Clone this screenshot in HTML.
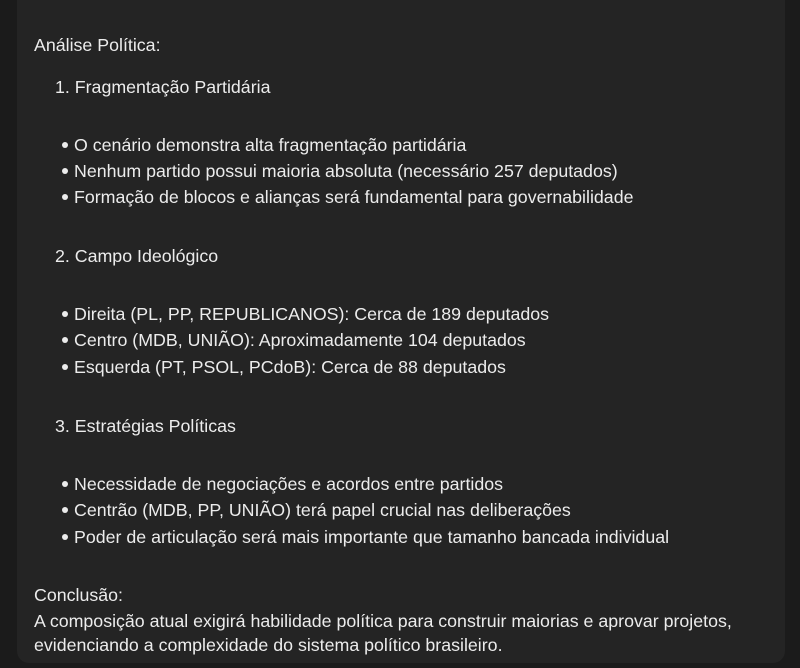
<!DOCTYPE html>
<html><head><meta charset="utf-8"><style>
html,body{margin:0;padding:0;width:800px;height:668px;background:#1b1b1b;overflow:hidden}
.card{position:absolute;left:17px;top:-20px;width:768px;height:683px;background:#242424;border-radius:12px}
.l{position:absolute;font-family:"Liberation Sans",sans-serif;font-size:17.8px;color:#ececec;white-space:nowrap;line-height:20px}
.b::before{content:"";position:absolute;left:-12px;top:7px;width:6px;height:6px;border-radius:50%;background:#ececec}
</style></head><body>
<div class="card"></div>
<div class="l" style="left:34px;top:35px">Análise Política:</div>
<div class="l" style="left:55px;top:77px">1. Fragmentação Partidária</div>
<div class="l b" style="left:74px;top:135px">O cenário demonstra alta fragmentação partidária</div>
<div class="l b" style="left:74px;top:161px">Nenhum partido possui maioria absoluta (necessário 257 deputados)</div>
<div class="l b" style="left:74px;top:187px">Formação de blocos e alianças será fundamental para governabilidade</div>
<div class="l" style="left:55px;top:246px">2. Campo Ideológico</div>
<div class="l b" style="left:74px;top:304px">Direita (PL, PP, REPUBLICANOS): Cerca de 189 deputados</div>
<div class="l b" style="left:74px;top:330px">Centro (MDB, UNIÃO): Aproximadamente 104 deputados</div>
<div class="l b" style="left:74px;top:357px">Esquerda (PT, PSOL, PCdoB): Cerca de 88 deputados</div>
<div class="l" style="left:55px;top:416px">3. Estratégias Políticas</div>
<div class="l b" style="left:74px;top:474px">Necessidade de negociações e acordos entre partidos</div>
<div class="l b" style="left:74px;top:500px">Centrão (MDB, PP, UNIÃO) terá papel crucial nas deliberações</div>
<div class="l b" style="left:74px;top:527px">Poder de articulação será mais importante que tamanho bancada individual</div>
<div class="l" style="left:34px;top:585px">Conclusão:</div>
<div class="l" style="left:34px;top:611px">A composição atual exigirá habilidade política para construir maiorias e aprovar projetos,</div>
<div class="l" style="left:34px;top:635px">evidenciando a complexidade do sistema político brasileiro.</div>
</body></html>
